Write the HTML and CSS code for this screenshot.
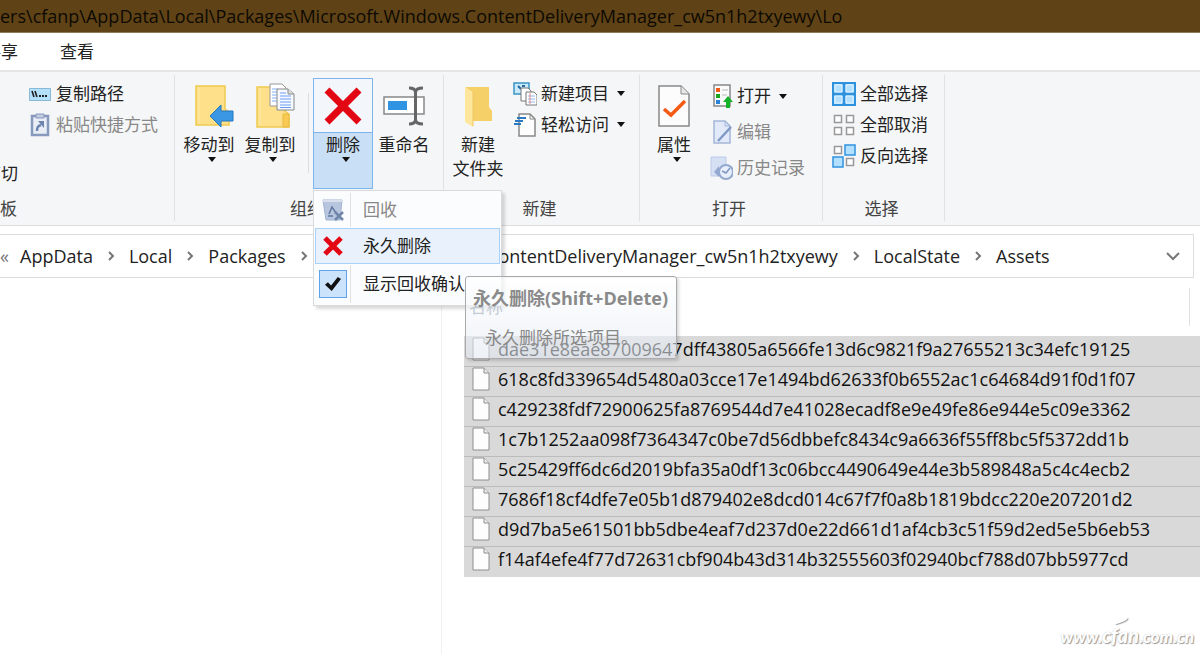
FILE: index.html
```
<!DOCTYPE html>
<html lang="zh-CN">
<head>
	<meta charset="UTF-8">
	<title>Assets</title>
	<link rel="stylesheet" href="styles.css">
</head>
<body>
	<svg class="defs" width="0" height="0">
		<symbol id="file" viewBox="0 0 18 24"><path d="M1 1h11l5 5v17H1z" fill="#fdfdfd" stroke="#8e8e8e"/><path d="M12 1v5h5" fill="#eee" stroke="#8e8e8e"/></symbol>
		<symbol id="down" viewBox="0 0 8 5"><path d="M0 0h8L4 5z" fill="#111"/></symbol>
		<symbol id="next" viewBox="0 0 8 10"><path d="M2 1l4 4-4 4" fill="none" stroke="#777" stroke-width="2"/></symbol>
	</svg>
	<header class="title">ers\cfanp\AppData\Local\Packages\Microsoft.Windows.ContentDeliveryManager_cw5n1h2txyewy\Lo</header>
	<nav class="tabs">
		<button class="tab cut">共享</button>
		<button class="tab">查看</button>
	</nav>
	<div class="ribbon">
		<section class="group clipboard">
			<div class="tools">
				<div class="edge"><button class="small cut">剪切</button></div>
				<div class="col">
					<button class="small">
						<svg class="ico" viewBox="0 0 24 24"><path d="M1.500 6.500h21v12h-21z" fill="#b3e0fa" stroke="#8ab9d6"/><path d="M4 9l2 6M7 9l2 6" stroke="#222" stroke-width="1.600"/><path d="M11 14h2M14 14h2M17 14h2" stroke="#222" stroke-width="2"/></svg>
						复制路径
					</button>
					<button class="small" disabled>
						<svg class="ico" viewBox="0 0 24 24"><path d="M4 3h16v19H4z" fill="#e8edf6" stroke="#8799bd" stroke-width="2.500"/><path d="M8 1h8v4H8z" fill="#c3cde0" stroke="#8799bd"/><path d="M9 18c0-4 1-5 4-6" fill="none" stroke="#6c83af" stroke-width="2.500"/><path d="M10 8h6v7z" fill="#6c83af"/></svg>
						粘贴快捷方式
					</button>
				</div>
			</div>
			<h2 class="caption">板</h2>
		</section>
		<section class="group organize">
			<div class="tools">
				<button class="big">
					<span class="pic"><svg width="50" height="44" viewBox="-10 0 50 44"><path d="M2 2h29v23l4 3v13H2z" fill="#fee08a" stroke="#efca50" stroke-width="1.500"/><path d="M5 3v37" stroke="#fbe9a8"/><path d="M16 32l11-11v6h12v10H27v6z" fill="#3b97e3" stroke="#2277bd"/></svg></span>
					移动到
					<svg class="down" width="8" height="5"><use href="#down"/></svg>
				</button>
				<button class="big">
					<span class="pic"><svg width="50" height="46" viewBox="-10 0 50 46"><path d="M2 4h28v24l4 3v13H2z" fill="#fee08a" stroke="#efca50" stroke-width="1.500"/><path d="M5 5v37" stroke="#fbe9a8"/><path d="M28 31h6v13h-6z" fill="#f8ca54" stroke="#e9b93c"/><path d="M15 1h12l4 4v18H15z" fill="#fff" stroke="#999"/><path d="M17 6h6M17 9h6M17 12h6M17 15h6M17 18h6" stroke="#7cacf0"/><path d="M22 6h11l6 5v16H22z" fill="#f5f9ff" stroke="#888"/><path d="M33 6v5h6" fill="#ddd" stroke="#888"/><path d="M25 10h6M25 13h11M25 16h11M25 19h11M25 22h11M25 24.500h11" stroke="#6c9df0"/></svg></span>
					复制到
					<svg class="down" width="8" height="5"><use href="#down"/></svg>
				</button>
				<i class="bar"></i>
				<div class="delete">
					<button class="big open">
						<span class="pic"><svg width="38" height="38" viewBox="0 0 38 38"><path d="M3 3l32 32M35 3L3 35" stroke="#e30613" stroke-width="7"/></svg></span>
						删除
						<svg class="down" width="8" height="5"><use href="#down"/></svg>
					</button>
					<div class="menu">
						<button class="item" disabled>
							<span class="mark"><svg width="22" height="22" viewBox="0 0 22 22"><path d="M1 1h19l-2 20H4z" fill="#b7c5de" stroke="#a3b3d0"/><path d="M1 2h19" stroke="#d8e0ed" stroke-width="2"/><path d="M7 15l3-7 4 6M6 17h5" fill="none" stroke="#60779f" stroke-width="1.500"/><path d="M13 13l8 8M21 13l-8 8" stroke="#6f85aa" stroke-width="2.500"/></svg></span>
							<span class="name">回收</span>
						</button>
						<button class="item hot">
							<span class="mark"><svg width="20" height="20" viewBox="0 0 20 20"><path d="M2 2l16 16M18 2L2 18" stroke="#e30613" stroke-width="5"/></svg></span>
							<span class="name">永久删除</span>
						</button>
						<label class="item last">
							<span class="mark"><input type="checkbox" class="check" checked></span>
							<span class="name">显示回收确认</span>
						</label>
					</div>
					<div class="tip" role="tooltip">
						<b>永久删除(Shift+Delete)</b>
						<p>永久删除所选项目。</p>
					</div>
				</div>
				<button class="big">
					<span class="pic"><svg width="42" height="40" viewBox="0 0 42 40"><path d="M1 11h40v17H1z" fill="#fff" stroke="#888" stroke-width="1.500"/><path d="M5 15h19v9H5z" fill="#3194e2"/><path d="M26 2q6 0 6.500 4Q33 2 40 2M32.500 5v30M26 38q6 0 6.500-4Q33 38 40 38" fill="none" stroke="#666" stroke-width="3"/></svg></span>
					重命名
				</button>
			</div>
			<h2 class="caption">组织</h2>
		</section>
		<section class="group new">
			<div class="tools">
				<button class="big">
					<span class="pic"><svg width="30" height="42" viewBox="0 0 30 42"><path d="M3 2h23v20l3 4v10H3z" fill="#f5cf68"/><path d="M2 2l8 5v35l-8-5z" fill="#fee69c"/><path d="M10 7v34" stroke="#f0c860"/></svg></span>
					新建<br>文件夹
				</button>
				<div class="col">
					<button class="small">
						<svg class="ico" viewBox="0 0 24 24"><path d="M1 1h15v11H1z" fill="#c8eafb" stroke="#3a94c4" stroke-width="1.500"/><path d="M5 4l3 3M9 4h3" stroke="#286a9c" stroke-width="2"/><path d="M8 6h7l3 3v10H8z" fill="#fff" stroke="#777"/><path d="M13 10h8l3 3v10H13z" fill="#fff" stroke="#777"/><path d="M15 14h7M15 17h7M15 20h7" stroke="#8db2ea"/><path d="M17 11v11" stroke="#e98989"/></svg>
						新建项目
						<svg class="down" width="8" height="5"><use href="#down"/></svg>
					</button>
					<button class="small">
						<svg class="ico" viewBox="0 0 24 24"><path d="M6 1h11l5 5v17H6z" fill="#fdfdfd" stroke="#888" stroke-width="1.500"/><path d="M17 1v5h5" fill="none" stroke="#888"/><path d="M4 5h9M2 8h8M1 11h7" stroke="#2b79c2" stroke-width="2"/></svg>
						轻松访问
						<svg class="down" width="8" height="5"><use href="#down"/></svg>
					</button>
				</div>
			</div>
			<h2 class="caption">新建</h2>
		</section>
		<section class="group view">
			<div class="tools">
				<button class="big">
					<span class="pic"><svg width="32" height="42" viewBox="0 0 32 42"><path d="M1 1h22l8 8v32H1z" fill="#fcfcfc" stroke="#888" stroke-width="1.500"/><path d="M23 1v8h8" fill="#e8e8e8" stroke="#888"/><path d="M6 24l7 6 14-14" fill="none" stroke="#f55a14" stroke-width="3.500"/></svg></span>
					属性
					<svg class="down" width="8" height="5"><use href="#down"/></svg>
				</button>
				<div class="col tall">
					<button class="small">
						<svg class="ico" viewBox="0 0 24 24"><path d="M5 1h16v21H5z" fill="#fafafa" stroke="#888" stroke-width="1.500"/><path d="M7 4h4v4H7z" fill="#f55a14"/><path d="M7 10h4v4H7z" fill="#1ba51b"/><path d="M7 16h4v4H7z" fill="#2b83d8"/><path d="M13 6h6M13 11h5" stroke="#bbb"/><path d="M19 12l5 6h-3v6h-4v-6h-3z" fill="#16b32a"/></svg>
						打开
						<svg class="down" width="8" height="5"><use href="#down"/></svg>
					</button>
					<button class="small" disabled>
						<svg class="ico" viewBox="0 0 24 24"><path d="M5 1h11l5 5v17H5z" fill="#e2eafa" stroke="#a4b6d8" stroke-width="1.500"/><path d="M16 1v5h5" fill="none" stroke="#a4b6d8"/><path d="M9 21L22 7" stroke="#8199c6" stroke-width="2.500"/></svg>
						编辑
					</button>
					<button class="small" disabled>
						<svg class="ico" viewBox="0 0 24 24"><path d="M2 1h15v19H2z" fill="#d5e0f4" stroke="#bccbe6"/><circle cx="17" cy="16" r="7" fill="#e8eefa" stroke="#94a9cf" stroke-width="2"/><path d="M13 15l4 2 4-5" fill="none" stroke="#7f97c2" stroke-width="1.500"/><path d="M5 16l5-6v11z" fill="#94a9cf"/></svg>
						历史记录
					</button>
				</div>
			</div>
			<h2 class="caption">打开</h2>
		</section>
		<section class="group select">
			<div class="tools">
				<div class="col">
					<button class="small">
						<svg class="ico" viewBox="0 0 24 24"><path d="M1 1h22v22H1z" fill="#b4e0ff" stroke="#2f92df" stroke-width="2"/><path d="M12 1v22M1 12h22" stroke="#2f92df" stroke-width="3"/><path d="M3 3h7v7H3zM14 3h7v7h-7zM3 14h7v7H3zM14 14h7v7h-7z" fill="none" stroke="#e3f4ff"/></svg>
						全部选择
					</button>
					<button class="small">
						<svg class="ico" viewBox="0 0 24 24"><path d="M2.500 2.500h7v7h-7zM14.500 2.500h7v7h-7zM2.500 14.500h7v7h-7zM14.500 14.500h7v7h-7z" fill="#fff" stroke="#999" stroke-width="1.500"/></svg>
						全部取消
					</button>
					<button class="small">
						<svg class="ico" viewBox="0 0 24 24"><path d="M2.500 2.500h7v7h-7zM14.500 14.500h7v7h-7z" fill="#fff" stroke="#999" stroke-width="1.500"/><path d="M13 1h10v10H13zM1 13h10v10H1z" fill="#b4e0ff" stroke="#2f92df" stroke-width="1.500"/></svg>
						反向选择
					</button>
				</div>
			</div>
			<h2 class="caption">选择</h2>
		</section>
	</div>
	<nav class="address">
		<span class="back">«</span>
		<a href="#">AppData</a>
		<svg width="8" height="10"><use href="#next"/></svg>
		<a href="#">Local</a>
		<svg width="8" height="10"><use href="#next"/></svg>
		<a href="#">Packages</a>
		<svg width="8" height="10"><use href="#next"/></svg>
		<a href="#">Microsoft.Windows.ContentDeliveryManager_cw5n1h2txyewy</a>
		<svg width="8" height="10"><use href="#next"/></svg>
		<a href="#">LocalState</a>
		<svg width="8" height="10"><use href="#next"/></svg>
		<a href="#">Assets</a>
		<button class="history" aria-label="以前的位置"><svg width="14" height="10" viewBox="0 0 14 10"><path d="M1 2l6 6 6-6" fill="none" stroke="#777" stroke-width="2"/></svg></button>
	</nav>
	<main class="main">
		<aside class="tree"></aside>
		<table class="files">
			<thead>
				<tr><th>名称</th><th class="date"><i></i></th></tr>
			</thead>
			<tbody>
				<tr><td colspan="2"><svg width="18" height="24"><use href="#file"/></svg>dae31e8eae87009647dff43805a6566fe13d6c9821f9a27655213c34efc19125</td></tr>
				<tr><td colspan="2"><svg width="18" height="24"><use href="#file"/></svg>618c8fd339654d5480a03cce17e1494bd62633f0b6552ac1c64684d91f0d1f07</td></tr>
				<tr><td colspan="2"><svg width="18" height="24"><use href="#file"/></svg>c429238fdf72900625fa8769544d7e41028ecadf8e9e49fe86e944e5c09e3362</td></tr>
				<tr><td colspan="2"><svg width="18" height="24"><use href="#file"/></svg>1c7b1252aa098f7364347c0be7d56dbbefc8434c9a6636f55ff8bc5f5372dd1b</td></tr>
				<tr><td colspan="2"><svg width="18" height="24"><use href="#file"/></svg>5c25429ff6dc6d2019bfa35a0df13c06bcc4490649e44e3b589848a5c4c4ecb2</td></tr>
				<tr><td colspan="2"><svg width="18" height="24"><use href="#file"/></svg>7686f18cf4dfe7e05b1d879402e8dcd014c67f7f0a8b1819bdcc220e207201d2</td></tr>
				<tr><td colspan="2"><svg width="18" height="24"><use href="#file"/></svg>d9d7ba5e61501bb5dbe4eaf7d237d0e22d661d1af4cb3c51f59d2ed5e5b6eb53</td></tr>
				<tr><td colspan="2"><svg width="18" height="24"><use href="#file"/></svg>f14af4efe4f77d72631cbf904b43d314b32555603f02940bcf788d07bb5977cd</td></tr>
			</tbody>
		</table>
		<div class="logo">www.<span>cfan</span>.com.cn</div>
	</main>
</body>
</html>
```
FILE: styles.css
```
*{margin:0;padding:0;box-sizing:border-box;}
body{min-height:100vh;display:flex;flex-direction:column;overflow:hidden;background-color:#fff;color:#222;font-family:"Open Sans","Noto Sans CJK SC",sans-serif;font-size:17px;line-height:24px;}
button{border:0;background:none;font:inherit;color:inherit;white-space:nowrap;}
button:disabled{color:#888;}
a{color:inherit;text-decoration:none;}
svg{flex:none;}
.defs{position:absolute;}

/*标题栏*/
.title{height:33px;line-height:33px;background-color:#5f4316;border-bottom:1px solid #8f7c5c;color:#0d0903;font-size:18px;white-space:nowrap;}
.tabs{height:37px;display:flex;align-items:center;gap:42px;}
.cut{margin-left:-16px;}

/*功能区*/
.ribbon{display:flex;padding:3px 0 4px;background-color:#f5f6f7;border-top:2px solid #e4e5e6;border-bottom:1px solid #dcddde;}
.group{display:flex;flex-direction:column;border-right:1px solid #e0e1e2;}
.tools{display:flex;gap:5px;padding:3px 4px 0;height:114px;}
.caption{padding:8px 4px 0 0;font-size:17px;font-weight:normal;text-align:center;color:#444;}
.clipboard{min-width:175px;}
.clipboard .tools{padding-left:0;}
.clipboard .caption{text-align:left;}
.organize{min-width:269px;}
.organize .tools{gap:1px;}
.new{min-width:196px;}
.view{min-width:183px;}
.select{min-width:122px;}
.select .tools{padding-left:9px;}
.edge{width:23px;display:flex;align-items:flex-end;}
.bar{width:1px;height:80px;margin:15px 3px 0 7px;background-color:#dedfe0;}
.col{display:flex;flex-direction:column;align-items:flex-start;}
.small{height:31px;display:flex;align-items:center;gap:4px;}
.small .down{margin-left:4px;}
.tall .small{height:36px;}
.ico{width:24px;height:24px;}
.big{width:60px;height:111px;display:flex;flex-direction:column;align-items:center;}
.big .down{margin-left:5px;}
.pic{width:100%;height:55px;display:flex;align-items:center;justify-content:center;}
.open{border:1px solid #7db4ee;background-color:#c9dff6;}
.open .pic{height:54px;background-color:#f3f6fa;border-bottom:1px solid #7db4ee;}

/*删除菜单*/
.delete{position:relative;}
.menu{position:absolute;z-index:1;left:0;top:112px;width:189px;padding:1px;background-color:#fbfcfd;border:1px solid #d9dadb;box-shadow:3px 3px 3px rgba(0,0,0,.15);}
.item{width:100%;height:36px;display:flex;align-items:center;border:1px solid transparent;text-align:left;white-space:nowrap;}
.last{height:40px;}
.mark{width:35px;height:100%;display:flex;align-items:center;justify-content:center;border-right:1px solid #e0e1e2;}
.name{padding-left:12px;}
.hot{background-color:#e9f2fc;border-color:#a8d2fa;}
.hot .mark{border-color:transparent;}
.check{appearance:none;width:28px;height:28px;background-color:#cbe3fb;border:1px solid #5da3ea;display:flex;align-items:center;justify-content:center;}
.check:checked::before{content:"";width:16px;height:14px;background-color:#111;clip-path:polygon(0 55%,18% 38%,38% 60%,80% 0,100% 14%,42% 100%);}
.tip{position:absolute;z-index:2;left:152px;top:198px;width:212px;height:83px;padding:9px 7px;background-image:linear-gradient(rgba(255,255,255,.7),rgba(225,232,242,.55));border:1px solid #aaa;border-radius:3px;box-shadow:2px 2px 3px rgba(0,0,0,.15);color:#8a8a8a;white-space:nowrap;}
.tip b{font-size:18px;}
.tip p{padding:15px 0 0 12px;color:#888;}

/*地址栏*/
.address{height:44px;margin:8px 6px 0 0;display:flex;align-items:center;border:1px solid #dcdcdc;border-left:0;white-space:nowrap;font-size:18px;}
.address svg{margin:0 14px;}
.back{width:20px;color:#777;}
.history{margin-left:auto;}
.history svg{display:block;margin:0 13px;}

/*文件列表*/
.main{flex:1;display:flex;position:relative;}
.tree{width:442px;margin-right:22px;border-right:1px solid #f0f0f0;}
.files{flex:1;align-self:flex-start;border-collapse:collapse;}
.files th{height:58px;padding-left:5px;font-weight:normal;text-align:left;color:#6d7f96;}
.files .date{width:11px;padding:0;}
.date i{display:block;height:38px;border-left:1px solid #e0e0e0;}
.files td{height:30px;padding-left:8px;background-color:#d9d9d9;border-bottom:1px solid #bcbcbc;color:#111;font-size:18px;white-space:nowrap;}
.files td svg{margin:0 8px 4px 0;vertical-align:middle;}
.files tr:last-child td{border-bottom-color:#d9d9d9;}
.logo{position:absolute;right:6px;bottom:5px;font-family:Lato,sans-serif;font-size:17px;font-weight:900;font-style:italic;color:#fff;text-shadow:1px 1px 1px #999,0 0 1px #bbb;}
.logo span{position:relative;font-size:20px;}
/*f上面的一撇*/
.logo span::before{content:"";position:absolute;left:12px;top:-4px;width:14px;height:4px;border-radius:100% 0;background-color:#fff;box-shadow:1px 1px 1px #999;transform:rotate(-12deg);}
```
